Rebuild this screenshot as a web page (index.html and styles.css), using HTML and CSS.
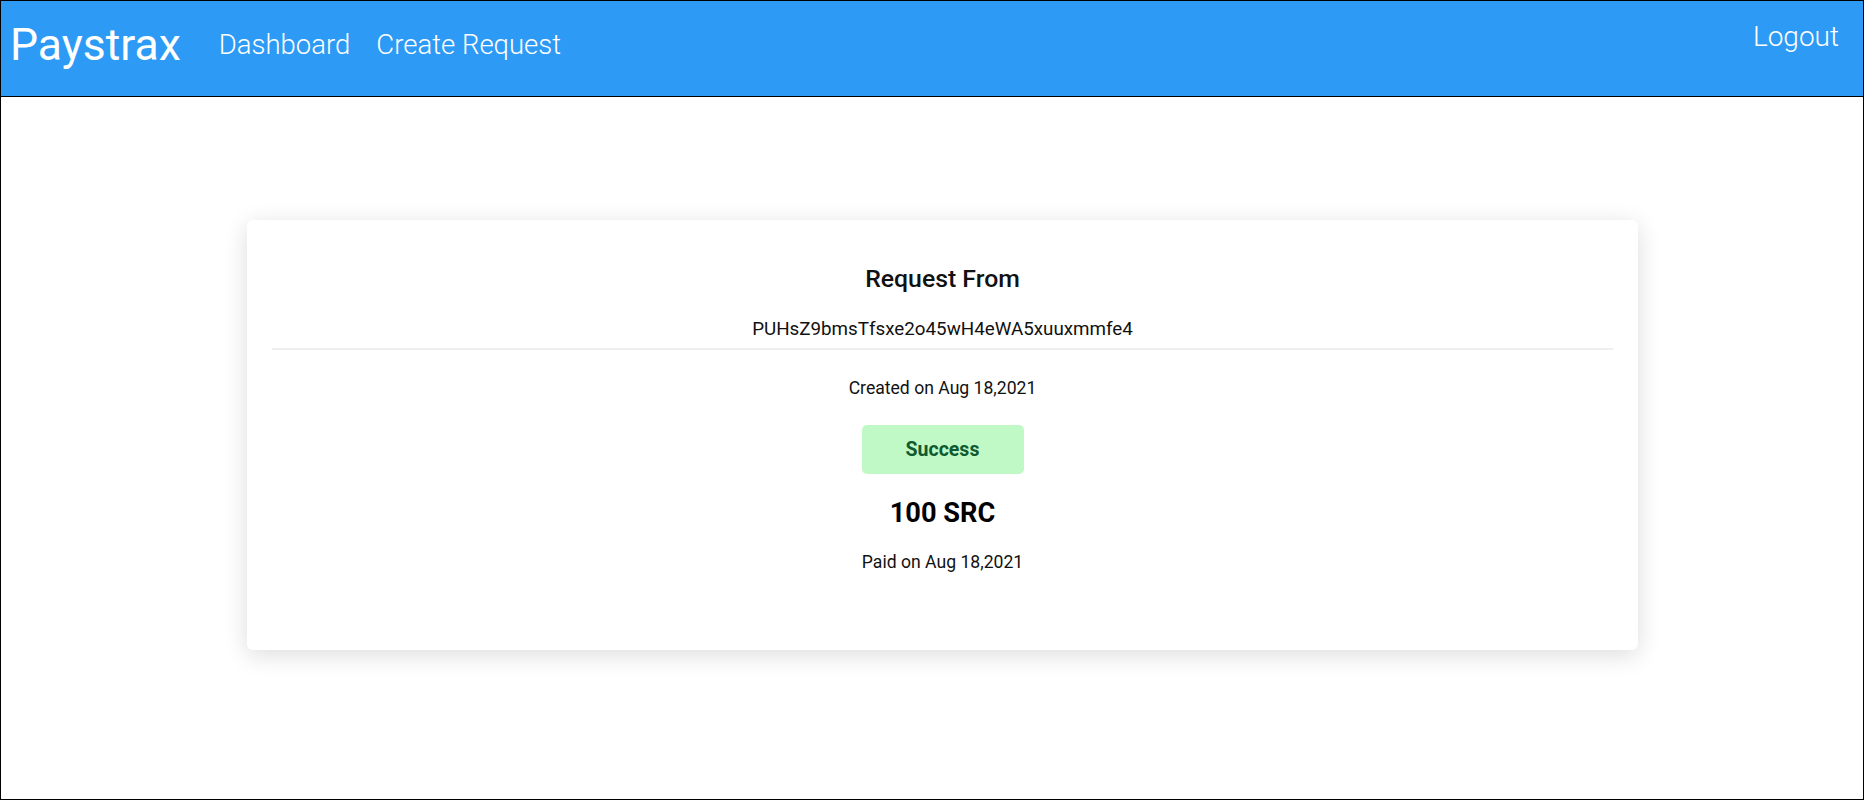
FILE: index.html
```html
<!DOCTYPE html>
<html lang="en">
<head>
<meta charset="utf-8">
<title>Paystrax</title>
<link rel="stylesheet" href="styles.css">
</head>
<body>
<div class="frame">
  <header class="topbar">
    <div class="topbar-left">
      <a class="brand" href="#">Paystrax</a>
      <nav class="nav">
        <a class="nav-link" href="#">Dashboard</a>
        <a class="nav-link" href="#">Create Request</a>
      </nav>
    </div>
    <a class="logout" href="#">Logout</a>
  </header>
  <main class="main">
    <section class="card">
      <h2 class="card-title">Request From</h2>
      <p class="address">PUHsZ9bmsTfsxe2o45wH4eWA5xuuxmmfe4</p>
      <hr class="divider">
      <p class="meta created">Created on Aug 18,2021</p>
      <div class="badge">Success</div>
      <p class="amount">100 SRC</p>
      <p class="meta paid">Paid on Aug 18,2021</p>
    </section>
  </main>
</div>
</body>
</html>
```

FILE: styles.css
```css
* { box-sizing: border-box; }
html, body { margin: 0; padding: 0; background: #fff; }
body { font-family: Roboto, "Liberation Sans", Arial, sans-serif; color: #111; }

.frame {
  width: 1864px;
  height: 800px;
  border: 1px solid #000;
  overflow: hidden;
}

.topbar {
  height: 96px;
  background: #2d9bf5;
  border-bottom: 1px solid #000;
  display: flex;
  justify-content: space-between;
  align-items: flex-start;
  padding: 17px 24px 0 9px;
}
.topbar-left {
  display: flex;
  align-items: center;
}
.brand {
  color: #fff;
  text-decoration: none;
  font-size: 44.5px;
  line-height: 54px;
  font-weight: 400;
  margin-right: 38px;
}
.nav { display: flex; gap: 26px; }
.nav-link {
  color: #fff;
  text-decoration: none;
  font-size: 27.5px;
  line-height: 34px;
  font-weight: 300;
}
.logout {
  color: #fff;
  text-decoration: none;
  font-size: 28px;
  line-height: 34px;
  font-weight: 300;
  margin-top: 2px;
}

.main {
  padding: 123px 224px 0 246px;
}
.card {
  width: 1391px;
  height: 430px;
  background: #fff;
  border-radius: 6px;
  box-shadow: 0 5px 25px rgba(0, 0, 0, 0.14);
  padding: 45px 25px 0;
  display: flex;
  flex-direction: column;
  align-items: center;
  text-align: center;
}
.card-title {
  margin: 0;
  font-size: 24.8px;
  line-height: 28px;
  font-weight: 500;
  color: #111;
}
.address {
  margin: 26px 0 0;
  font-size: 18.8px;
  line-height: 21px;
  color: #111;
}
.divider {
  align-self: stretch;
  border: 0;
  height: 2px;
  background: #efefef;
  margin: 8px 0 0;
}
.meta {
  margin: 0;
  font-size: 17.6px;
  line-height: 19px;
  color: #111;
}
.created { margin-top: 29px; }
.badge {
  margin-top: 27px;
  width: 162px;
  height: 49px;
  border-radius: 5px;
  background: #c1f9c6;
  color: #0f5a30;
  font-size: 19.5px;
  font-weight: 700;
  display: flex;
  align-items: center;
  justify-content: center;
}
.amount {
  margin: 24px 0 0;
  font-size: 27.2px;
  line-height: 30px;
  font-weight: 700;
  color: #000;
}
.paid { margin-top: 25px; }
```
